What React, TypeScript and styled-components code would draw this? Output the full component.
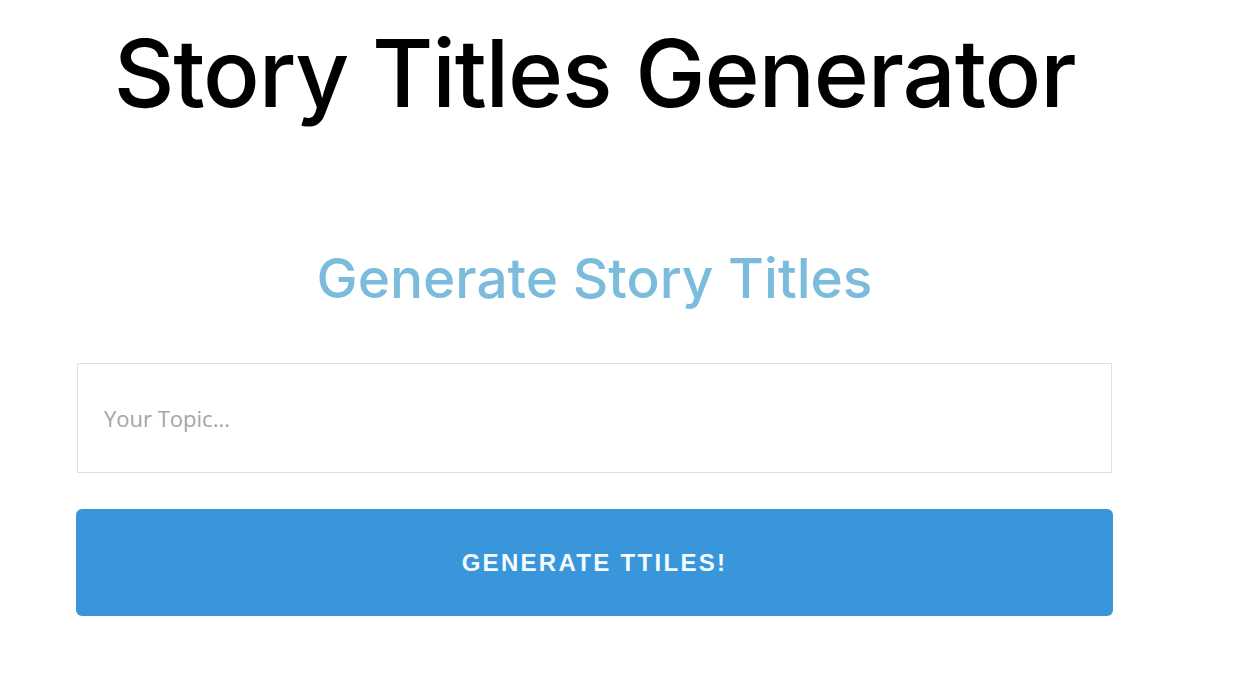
import React, { useState } from 'react';
import styled, { createGlobalStyle } from 'styled-components';

const GlobalStyle = createGlobalStyle`
  html, body {
    margin: 0;
    padding: 0;
    background: #fff;
  }
  body {
    font-family: 'Inter', 'Liberation Sans', sans-serif;
  }
`;

const Page = styled.div`
  width: 1037px;
  margin-left: 76px;
  display: flex;
  flex-direction: column;
  align-items: center;
`;

const Title = styled.h1`
  margin: 13px 0 0 0;
  color: #000;
  font-family: 'Inter', sans-serif;
  font-weight: 500;
  font-size: 94px;
  line-height: 120px;
  letter-spacing: -1.2px;
`;

const SubTitle = styled.h2`
  margin: 110px 0 0 0;
  color: #7bbcdd;
  font-family: 'Inter', sans-serif;
  font-weight: 500;
  font-size: 55px;
  line-height: 70px;
  letter-spacing: 0;
`;

const Form = styled.form`
  width: 100%;
  margin-top: 50px;
  display: flex;
  flex-direction: column;
  gap: 36px;
`;

const TopicInput = styled.input`
  box-sizing: border-box;
  width: 1035px;
  height: 110px;
  margin-left: 1px;
  padding: 0 26px;

  color: #333;
  font-family: 'Open Sans', sans-serif;
  font-size: 22px;

  border: 1px solid #e0e0e0;
  border-radius: 0;
  outline: none;
  caret-color: #000;

  &::placeholder {
    color: #a5a5a5;
  }
`;

const GenerateButton = styled.button`
  width: 100%;
  height: 107px;

  color: #f4fbff;
  font-family: 'Liberation Sans', Arial, sans-serif;
  font-weight: 700;
  font-size: 24px;
  letter-spacing: 2.3px;
  text-transform: uppercase;

  border: none;
  border-radius: 6px;
  background: #3a96db;
  cursor: pointer;
`;

function App() {
  const [topic, setTopic] = useState('');

  return (
    <>
      <GlobalStyle />
      <Page>
        <Title>Story Titles Generator</Title>
        <SubTitle>Generate Story Titles</SubTitle>
        <Form onSubmit={e => e.preventDefault()}>
          <TopicInput
            placeholder="Your Topic..."
            value={topic}
            onChange={e => setTopic(e.target.value)}
            autoFocus
          />
          <GenerateButton type="submit">Generate Ttiles!</GenerateButton>
        </Form>
      </Page>
    </>
  );
}
export default App;
